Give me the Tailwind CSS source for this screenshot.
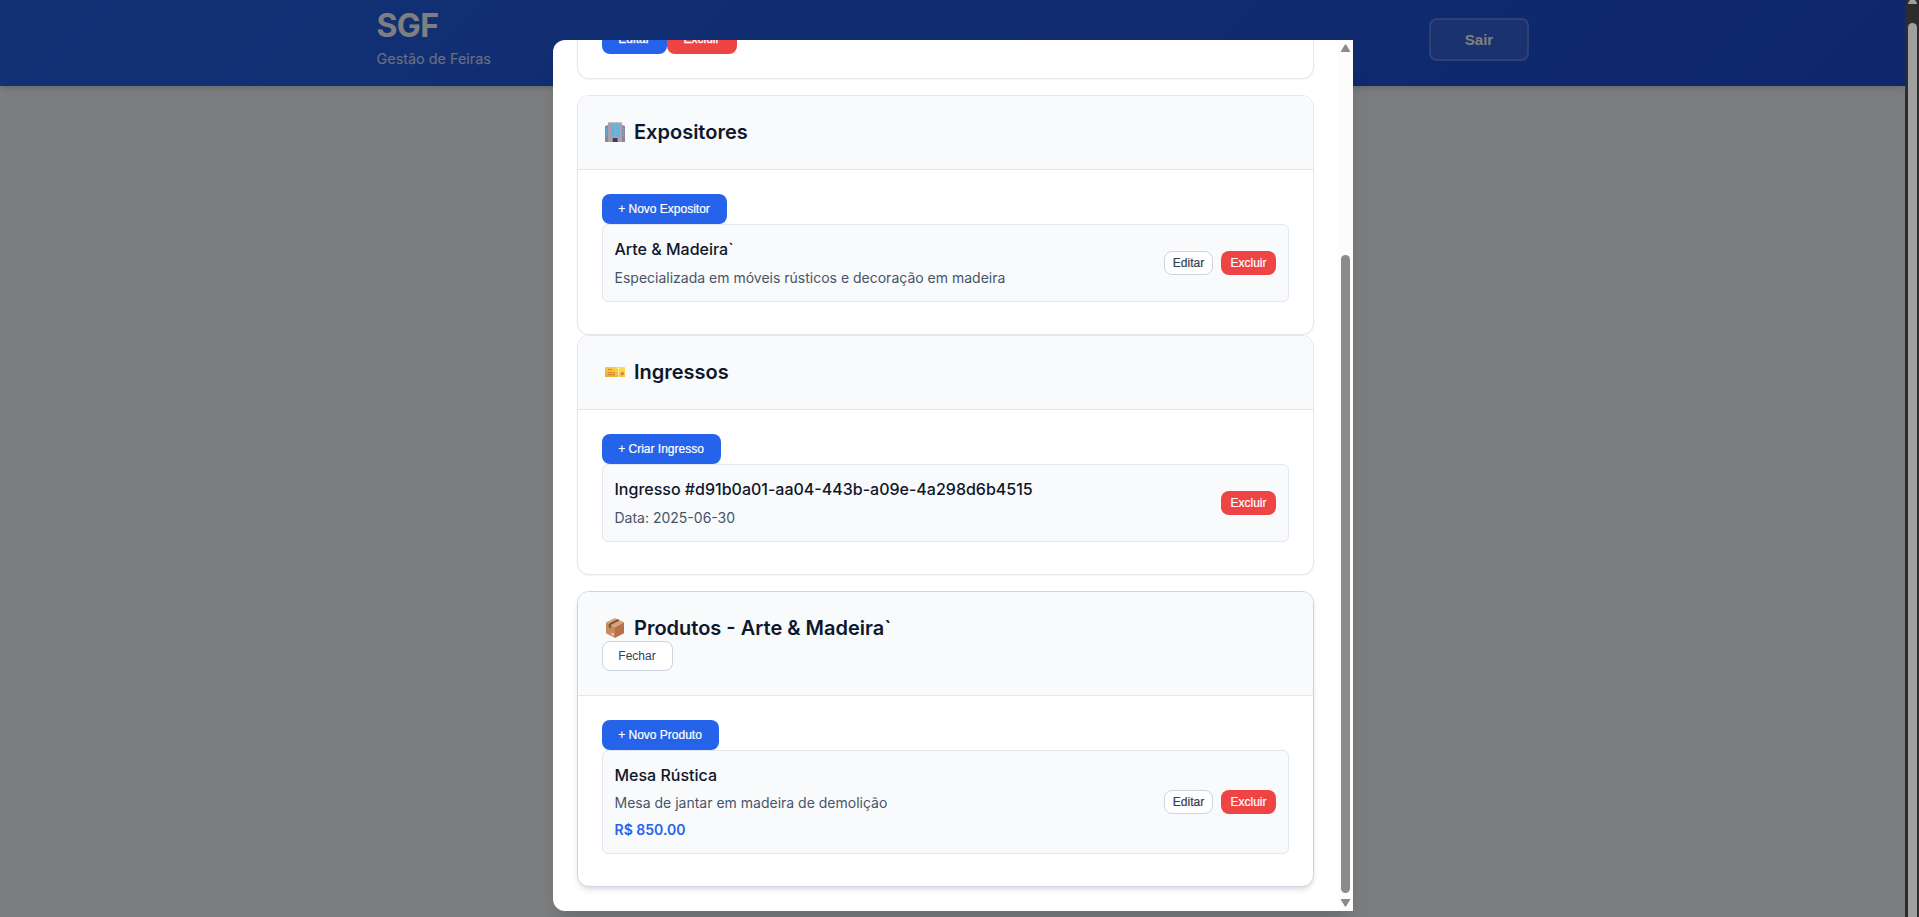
<!DOCTYPE html>
<html lang="pt-BR">
<head>
<meta charset="utf-8">
<title>SGF</title>
<script src="https://cdn.jsdelivr.net/npm/@tailwindcss/browser@4"></script>
</head>
<body class="relative h-[917px] w-[1919px] overflow-hidden bg-[#f8fafc] font-[Inter,sans-serif] text-[#0f172a]">
<div class="flex h-full">
  <div class="h-full w-[1905px] bg-[#f8fafc]">
    <header class="h-[86px] bg-[linear-gradient(135deg,#2563eb_0%,#1d4ed8_100%)] shadow-[0_4px_6px_-1px_rgba(0,0,0,0.1),0_2px_4px_-1px_rgba(0,0,0,0.06)]">
      <div class="mx-auto flex w-[1152px] items-start justify-between text-white">
        <div class="pt-[6px]">
          <h1 class="text-[32px] leading-[40px] font-bold tracking-[-0.6px]">SGF</h1>
          <p class="mt-px text-[14.4px] leading-[23px] text-white/80">Gestão de Feiras</p>
        </div>
        <button class="mt-[18px] h-[43px] w-[100px] rounded-lg border-2 border-white/20 bg-white/10 pt-px pl-px font-[Liberation_Sans,Arial,sans-serif] text-[15px] font-bold">Sair</button>
      </div>
    </header>
  </div>
  <!-- page scrollbar -->
  <div class="flex h-full w-[14px] flex-col items-center bg-[#2c2c2c] pl-[1px]">
    <svg class="h-[4px] w-[9px] shrink-0" viewBox="0 0 9 4"><path d="M2 0h5L9 3v1H0V3z" fill="#9f9f9f"/></svg>
    <div class="mt-[19px] w-[9px] flex-1 rounded-t-full bg-[#9f9f9f]"></div>
  </div>
</div>

<div class="absolute inset-y-0 left-0 flex w-[1905px] justify-center bg-black/50 pt-[40px]">
  <div class="flex h-[871px] w-[800px] overflow-hidden rounded-l-xl bg-white shadow-[0_20px_25px_-5px_rgba(0,0,0,0.1),0_10px_10px_-5px_rgba(0,0,0,0.04)]">
    <div class="flex w-[785px] flex-col px-6">
      <section class="h-[39px] shrink-0 rounded-b-xl border border-t-0 border-[#e2e8f0] shadow-[0_1px_2px_rgba(0,0,0,0.05)]">
        <div class="-mt-px flex h-[15px] items-end overflow-hidden px-6 font-[Liberation_Sans,Arial,sans-serif] text-xs font-medium text-white [-webkit-text-stroke:0.3px_white]">
          <button class="h-[30px] w-[65px] shrink-0 rounded-lg bg-[#2563eb]">Editar</button>
          <button class="h-[30px] w-[70px] shrink-0 rounded-lg bg-[#ef4444]">Excluir</button>
        </div>
      </section>

      <section class="mt-4 overflow-hidden rounded-xl border border-[#e2e8f0] bg-white shadow-[0_1px_2px_rgba(0,0,0,0.05)]">
        <div class="border-b border-[#e2e8f0] bg-[#f8fafc] p-6">
          <h3 class="flex h-[25px] items-center pl-[3px] text-xl leading-[25px] font-semibold">
            <svg class="-mt-px mr-[9.5px] h-5 w-5" viewBox="0 0 20 20"><path d="M0 4l3-1v17H0zM20 4l-3-1v17h3z" fill="#8f8796"/><path d="M3 1l1-1h12l1 1v19H3z" fill="#aaa1b0"/><path d="M4 0h12l1 1H3z" fill="#c4bdca"/><path d="M6 2h3.300v2.400H6zM11 2h3.300v2.400H11zM6 5.400h3.300v2.400H6zM11 5.400h3.300v2.400H11zM6 8.800h3.300v2.400H6zM11 8.800h3.300v2.400H11zM6 12.200h3.300v2.400H6zM11 12.200h3.300v2.400H11zM1 6h1.400v1.700H1zM1 9h1.400v1.700H1zM1 12h1.400v1.700H1zM17.700 6h1.400v1.700h-1.400zM17.700 9h1.400v1.700h-1.400zM17.700 12h1.400v1.700h-1.400z" fill="#40bdf5"/><path d="M7.800 16h4.700v4H7.800z" fill="#4a3557"/></svg>
            Expositores</h3>
        </div>
        <div class="px-6 pt-6 pb-8">
          <button class="block h-[30px] w-[125px] rounded-lg bg-[#2563eb] font-[Liberation_Sans,Arial,sans-serif] text-xs font-medium text-white [-webkit-text-stroke:0.2px_white]">+ Novo Expositor</button>
          <div class="flex h-[78px] items-center justify-between rounded-md border border-[#e2e8f0] bg-[#f8fafc] px-3">
            <div>
              <h4 class="text-base leading-[25.6px] font-medium">Arte &amp; Madeira`</h4>
              <p class="mt-1 text-sm leading-[22.4px] text-[#475569]">Especializada em móveis rústicos e decoração em madeira</p>
            </div>
            <div class="flex gap-2 font-[Liberation_Sans,Arial,sans-serif] text-xs font-medium">
              <button class="h-6 w-[49px] rounded-lg border border-[#cbd5e1] bg-white pl-px text-[#334155] [-webkit-text-stroke:0.2px_#334155]">Editar</button>
              <button class="h-6 w-[55px] rounded-lg bg-[#ef4444] pl-px text-white [-webkit-text-stroke:0.2px_white]">Excluir</button>
            </div>
          </div>
        </div>
      </section>

      <section class="overflow-hidden rounded-xl border border-[#e2e8f0] bg-white shadow-[0_1px_2px_rgba(0,0,0,0.05)]">
        <div class="border-b border-[#e2e8f0] bg-[#f8fafc] p-6">
          <h3 class="flex h-[25px] items-center pl-[3px] text-xl leading-[25px] font-semibold">
            <svg class="-mt-px mr-[9.5px] h-5 w-5" viewBox="0 0 20 20"><defs><linearGradient id="tk" x1="0" y1="1" x2="1" y2="0"><stop offset="0" stop-color="#eba63a"/><stop offset="1" stop-color="#ffe34d"/></linearGradient></defs><path d="M0 5h13l.7.7.7-.7H20v10h-5.600l-.7-.7-.7.7H0z" fill="url(#tk)"/><path d="M3 7h4v1H3zM3 10.300h7v.9H3zM3 12.300h7v.9H3zM16 10.300h2.700v2.700H16z" fill="#cf7f30"/><path d="M13.700 6v9" stroke="#fff" stroke-width="1.200" stroke-dasharray="1.500 1.300"/></svg>
            Ingressos</h3>
        </div>
        <div class="px-6 pt-6 pb-8">
          <button class="block h-[30px] w-[119px] rounded-lg bg-[#2563eb] font-[Liberation_Sans,Arial,sans-serif] text-xs font-medium text-white [-webkit-text-stroke:0.2px_white]">+ Criar Ingresso</button>
          <div class="flex h-[78px] items-center justify-between rounded-md border border-[#e2e8f0] bg-[#f8fafc] px-3">
            <div>
              <h4 class="text-base leading-[25.6px] font-medium">Ingresso #d91b0a01-aa04-443b-a09e-4a298d6b4515</h4>
              <p class="mt-1 text-sm leading-[22.4px] text-[#475569]">Data: 2025-06-30</p>
            </div>
            <button class="h-6 w-[55px] rounded-lg bg-[#ef4444] pl-px font-[Liberation_Sans,Arial,sans-serif] text-xs font-medium text-white [-webkit-text-stroke:0.2px_white]">Excluir</button>
          </div>
        </div>
      </section>

      <section class="mt-4 overflow-hidden rounded-xl border border-[#cbd5e1] bg-white shadow-[0_4px_6px_-1px_rgba(0,0,0,0.1),0_2px_4px_-1px_rgba(0,0,0,0.06)]">
        <div class="border-b border-[#e2e8f0] bg-[#f8fafc] p-6">
          <h3 class="flex h-[25px] items-center pl-[3px] text-xl leading-[25px] font-semibold">
            <svg class="-mt-px mr-[9.5px] h-5 w-5" viewBox="0 0 20 20"><path d="M10 0l9 4.300-9 4.900L1 4.300z" fill="#d9a574"/><path d="M1 4.300l9 4.900V20l-9-4.700z" fill="#cb8a5c"/><path d="M19 4.300l-9 4.900V20l9-4.700z" fill="#b86f4b"/><path d="M12.500 1.200L14.800 2.300 6 7v3.500l-2.200-1.200V5.800z" fill="#7e5340"/><path d="M6.500 14.500l2.200 1.200v2.200l-2.200-1.200z" fill="#efc9d0"/></svg>
            Produtos - Arte &amp; Madeira`</h3>
          <button class="block h-[30px] w-[71px] rounded-lg border border-[#cbd5e1] bg-white font-[Liberation_Sans,Arial,sans-serif] text-xs font-medium text-[#334155]">Fechar</button>
        </div>
        <div class="px-6 pt-6 pb-8">
          <button class="block h-[30px] w-[117px] rounded-lg bg-[#2563eb] font-[Liberation_Sans,Arial,sans-serif] text-xs font-medium text-white [-webkit-text-stroke:0.2px_white]">+ Novo Produto</button>
          <div class="flex h-[104px] items-center justify-between rounded-md border border-[#e2e8f0] bg-[#f8fafc] px-3">
            <div>
              <h4 class="text-base leading-[25.6px] font-medium">Mesa Rústica</h4>
              <p class="mt-1 text-sm leading-[22.4px] text-[#475569]">Mesa de jantar em madeira de demolição</p>
              <p class="mt-1 text-sm leading-[22.4px] font-semibold text-[#2563eb]">R$ 850.00</p>
            </div>
            <div class="flex gap-2 font-[Liberation_Sans,Arial,sans-serif] text-xs font-medium">
              <button class="h-6 w-[49px] rounded-lg border border-[#cbd5e1] bg-white pl-px text-[#334155] [-webkit-text-stroke:0.2px_#334155]">Editar</button>
              <button class="h-6 w-[55px] rounded-lg bg-[#ef4444] pl-px text-white [-webkit-text-stroke:0.2px_white]">Excluir</button>
            </div>
          </div>
        </div>
      </section>
    </div>
    <!-- modal scrollbar -->
    <div class="flex w-[15px] flex-col items-center bg-[#fcfcfc] py-[4px]">
      <svg class="h-[8px] w-[9px]" viewBox="0 0 9 8"><path d="M4 .5h1L9 7v1H0V7z" fill="#8b8b8b"/></svg>
      <div class="mt-[203px] h-[638px] w-[9px] rounded-full bg-[#8b8b8b]"></div>
      <svg class="mt-[6px] h-[8px] w-[9px]" viewBox="0 0 9 8"><path d="M4 7.500h1L9 1V0H0v1z" fill="#8b8b8b"/></svg>
    </div>
  </div>
</div>
</body>
</html>
